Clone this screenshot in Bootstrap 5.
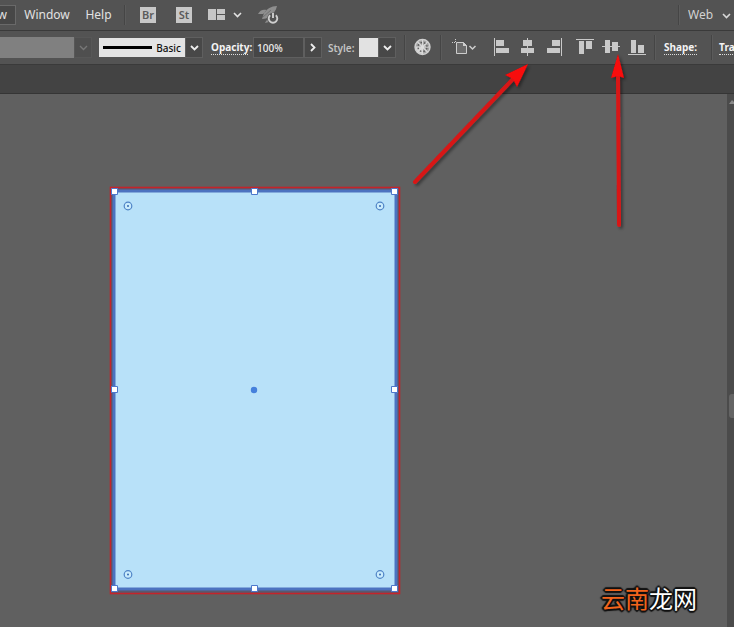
<!DOCTYPE html>
<html lang="en">
<head>
<meta charset="utf-8">
<meta name="viewport" content="width=device-width, initial-scale=1">
<title>Align to artboard</title>
<link href="https://cdn.jsdelivr.net/npm/bootstrap@5.3.0/dist/css/bootstrap.min.css" rel="stylesheet">
<style>
body{background:#606060;color:#e2e2e2;font:12px/16px "Noto Sans","Open Sans",sans-serif}
button,input,select{font:inherit;color:inherit;border:0;padding:0;background:none;border-radius:0}
button{display:flex;align-items:center;justify-content:center;flex:none}
svg{display:block;flex:none}
.menubar,.optbar{background:#535353;white-space:nowrap}
.menubar{height:31px;padding-bottom:1px;border-bottom:1px solid #3a3a3a}
.optbar{height:34px;border-bottom:1px solid #3a3a3a;font-size:10px;line-height:14px}
.tabstrip{height:29px;background:#434343;border-bottom:1px solid #353535}
.menu-open{width:16px;height:20px;background:#474747;border:1px solid #696969;border-left:0;overflow:hidden;justify-content:flex-end;padding-right:8px}
.menu-window{margin-left:8px;width:46px}
.menu-help{margin-left:15px;width:27px}
.rule{width:1px;height:20px;background:#454545;border-right:1px solid #5b5b5b;box-sizing:content-box;flex:none}
.optbar .rule{height:25px}
.rule-a{margin:0 14px 0 12px}
.tile{width:16px;height:16px;background:#c8c8c8;color:#5b5b5b;font:600 11px/16px "Noto Sans",sans-serif}
.tile-gap{margin-left:20px}
.grid-btn{margin-left:16px}
.rocket{margin-left:15px}
.workspace{width:26px;appearance:none;color:#d2d2d2}
.ws-chev{margin-right:3px}
.drop{width:18px;height:21px;background:#484848;border:1px solid #5f5f5f}
.drop.off{background:#4f4f4f;border-color:#575757}
.blank{width:74px;height:21px;background:#808080;appearance:none;flex:none}
.brush{width:86px;height:19px;background:#e4e4e4;color:#111;margin-left:7px;font-weight:500}
.dotted{color:#f4f4f4;font-weight:700;text-decoration:none;border-bottom:1px dotted #ddd;line-height:13px;flex:none}
.opacity-lab{margin-left:8px;width:37px}
.pct{width:51px;height:21px;background:#464646;border:1px solid #5f5f5f;padding-left:3px;color:#eee;margin-left:5px;flex:none;font-weight:500}
.style-lab{margin:0 6px;width:25px;color:#c4c4c4;font-weight:600}
.swatch{width:19px;height:19px;background:#e2e2e2}
.al{margin-left:10px}
.art{margin-left:6px}
.grp{margin-left:14px}
.stage{min-height:calc(100vh - 94px)}
.board{padding:92px 0 32px 109px}
.vbar{width:7px;background:#4b4b4b;flex:none}
.grip{width:5px;height:24px;background:#646464;border-radius:3px 0 0 3px;margin-bottom:209px}
.arrows{left:0;top:0;pointer-events:none}
.stamp{right:37px;bottom:13px;font:400 24px/32px "Noto Sans CJK SC",sans-serif;color:#fff;
text-shadow:-1px -1px 1px #111,1px -1px 1px #111,-1px 1px 1px #111,1px 1px 1px #111,2px 0 1px #111,-2px 0 1px #111,0 2px 1px #111,0 -2px 1px #111}
.stamp span{color:#f2641c}
</style>
<script src="https://cdn.jsdelivr.net/npm/bootstrap@5.3.0/dist/js/bootstrap.bundle.min.js"></script>
</head>
<body>
<div class="position-relative min-vh-100 overflow-hidden">
<nav class="menubar d-flex align-items-center" aria-label="Menu">
  <button class="menu-open">w</button>
  <button class="menu-window">Window</button>
  <button class="menu-help">Help</button>
  <span class="rule rule-a"></span>
  <button class="tile">Br</button>
  <button class="tile tile-gap">St</button>
  <button class="grid-btn" aria-label="Arrange documents">
    <svg width="35" height="16"><path fill="#c6c6c6" d="M0 2h8v11H0zM9 2h8v5H9zM9 8h8v5H9z"/><path d="M26 6l3.500 3.500L33 6" fill="none" stroke="#e2e2e2" stroke-width="1.600"/></svg>
  </button>
  <button class="rocket" aria-label="GPU performance">
    <svg width="22" height="20" viewBox="0 0 22 20"><path fill="#8e8e8e" d="M19 1C13 1 9 4 6 8L4 14c3 0 5-1 7-2 4-3 7-6 8-11zM0 9c2-4 5-5 9-4L5 9zM7 18c1-2 2-4 5-5l-1 4z"/><path d="M5 12l8-7" stroke="#727272"/><circle cx="15" cy="13.500" r="5.800" fill="#535353"/><path d="M12.200 10.200a4.300 4.300 0 1 0 5.600 0M15 8v5" fill="none" stroke="#cfcfcf" stroke-width="1.900"/></svg>
  </button>
  <span class="rule ms-auto me-2"></span>
  <select class="workspace me-2" aria-label="Workspace"><option>Web</option></select>
  <svg class="ws-chev" width="9" height="8"><path d="M1 3l3.500 3.500L8 3" fill="none" stroke="#d8d8d8" stroke-width="1.600"/></svg>
</nav>
<div class="optbar d-flex align-items-center" role="toolbar" aria-label="Control">
  <select class="blank" aria-label="Width profile" disabled></select>
  <button class="drop off" disabled aria-label="Profile list"><svg width="9" height="8"><path d="M1 2l3.500 3.500L8 2" fill="none" stroke="#777" stroke-width="1.400"/></svg></button>
  <button class="brush"><svg width="49" height="3" class="me-1"><path d="M0 0h49v3H0z"/></svg>Basic</button>
  <button class="drop" aria-label="Brush list"><svg width="9" height="8"><path d="M1 2l3.500 3.500L8 2" fill="none" stroke="#eee" stroke-width="1.800"/></svg></button>
  <a href="#opacity" class="dotted opacity-lab">Opacity:</a>
  <input class="pct" id="opacity" aria-label="Opacity" value="100%">
  <button class="drop" aria-label="Opacity slider"><svg width="8" height="9"><path d="M2 1l3.500 3.500L2 8" fill="none" stroke="#eee" stroke-width="1.800"/></svg></button>
  <span class="style-lab">Style:</span>
  <button class="swatch" aria-label="Graphic style"></button>
  <button class="drop" aria-label="Style list"><svg width="9" height="8"><path d="M1 2l3.500 3.500L8 2" fill="none" stroke="#eee" stroke-width="1.800"/></svg></button>
  <span class="rule mx-2"></span>
  <button class="me-2" aria-label="Recolor artwork">
    <svg width="18" height="19" viewBox="-8.500 -9 18 19"><circle r="7.500" fill="#a2a2a2" stroke="#d0d0d0" stroke-width="1.400"/><path fill="#d4d4d4" d="M0 0L-7 0A7 7 0 0 0 0 7z"/><path d="M0-7V7M-7 0H7M-5-5L5 5M-5 5L5-5" stroke="#dadada" stroke-width="1.200"/><circle r="4.500" fill="none" stroke="#5c5c5c" stroke-width="1.400" stroke-dasharray="1.500 2.034" stroke-dashoffset="-1"/><circle r="1.500" fill="#ddd"/></svg>
  </button>
  <span class="rule me-1"></span>
  <button class="art" aria-label="Align to">
    <svg width="26" height="19" viewBox="0 0 26 19"><path d="M4.500 4.500h7l3 3v8h-10z" fill="#6c6c6c" stroke="#cdcdcd"/><path d="M11 4v4h4z" fill="#cdcdcd"/><path d="M0 4.500h4M3.500 1v3" stroke="#cdcdcd" stroke-dasharray="1 1"/><path d="M17.500 8l3 3 3-3" fill="none" stroke="#cdcdcd" stroke-width="1.500"/></svg>
  </button>
  <button class="ms-3" aria-label="Align left"><svg width="16" height="19"><path fill="#c9c9c9" d="M0 0h1v18H0zM2 2h8v6H2zM2 10h13v5H2z"/></svg></button>
  <button class="al" aria-label="Align horizontal centers"><svg width="16" height="19"><path fill="#c9c9c9" d="M7 0h1v18H7zM3 2h9v6H3zM1 10h13v5H1z"/></svg></button>
  <button class="al" aria-label="Align right"><svg width="16" height="19"><path fill="#c9c9c9" d="M15 0h1v18h-1zM6 2h8v6H6zM1 10h13v5H1z"/></svg></button>
  <button class="grp" aria-label="Align top"><svg width="18" height="19"><path fill="#c9c9c9" d="M0 1h18v1H0zM3 3h5v13H3zM10 3h6v8h-6z"/></svg></button>
  <button class="ms-2" aria-label="Align vertical centers"><svg width="18" height="19"><path fill="#c9c9c9" d="M0 8h18v1H0zM3 2h5v13H3zM10 4h6v9h-6z"/></svg></button>
  <button class="ms-2" aria-label="Align bottom"><svg width="18" height="19"><path fill="#c9c9c9" d="M0 16h18v1H0zM3 2h5v13H3zM10 7h6v8h-6z"/></svg></button>
  <span class="rule ms-2 me-2"></span>
  <a href="#shape" class="dotted">Shape:</a>
  <span class="rule grp art-rule"></span>
  <a href="#transform" class="dotted art">Transform</a>
</div>
<div class="tabstrip"></div>
<main class="stage d-flex justify-content-between">
  <div class="board">
    <svg width="292" height="409" viewBox="109 186 292 409" role="img" aria-label="Selected rectangle on artboard">
      <rect x="110.500" y="187.500" width="289" height="406" fill="#59596d" stroke="#c4242a" stroke-width="1.600"/>
      <rect x="114" y="191" width="282" height="398" fill="#b8e1f9" stroke="#4c72c0" stroke-width="3"/>
      <g fill="#fff" stroke="#4c78cc">
        <path d="M111.500 188.500h6v6h-6zM251.500 188.500h6v6h-6zM391.500 188.500h6v6h-6zM111.500 386.500h6v6h-6zM391.500 386.500h6v6h-6zM111.500 585.500h6v6h-6zM251.500 585.500h6v6h-6zM391.500 585.500h6v6h-6z"/>
      </g>
      <g fill="#c9ebfc" stroke="#4e83c6" stroke-width="1.200"><circle cx="128" cy="206" r="3.800"/><circle cx="380" cy="206" r="3.800"/><circle cx="128" cy="574.500" r="3.800"/><circle cx="380" cy="574.500" r="3.800"/></g>
      <g fill="#3569b0"><circle cx="128" cy="206" r="1"/><circle cx="380" cy="206" r="1"/><circle cx="128" cy="574.500" r="1"/><circle cx="380" cy="574.500" r="1"/></g>
      <circle cx="254" cy="390" r="3.200" fill="#4580dc"/>
    </svg>
  </div>
  <div class="vbar d-flex flex-column justify-content-between align-items-end">
    <svg width="5" height="12"><path d="M0 10l3-4 2 2v2z" fill="#8a8a8a"/></svg>
    <div class="grip"></div>
  </div>
</main>
<svg class="arrows position-absolute" width="660" height="240" aria-hidden="true">
  <defs><filter id="sh" filterUnits="userSpaceOnUse" x="400" y="40" width="260" height="200"><feDropShadow dx="2" dy="2" stdDeviation="1.500" flood-color="#000" flood-opacity=".4"/></filter></defs>
  <g filter="url(#sh)">
    <path d="M415 182L514 78" stroke="#d81618" stroke-width="4" stroke-linecap="round"/><path d="M528 64L517 87L513 79L505 75z" fill="#f80808"/>
    <path d="M619 225L618 76" stroke="#d81618" stroke-width="4" stroke-linecap="round"/><path d="M618 54L624 78L618 76L611 78z" fill="#f80808"/>
  </g>
</svg>
<div class="stamp position-absolute" lang="zh"><span>云南</span>龙网</div>
</div>
</body>
</html>
